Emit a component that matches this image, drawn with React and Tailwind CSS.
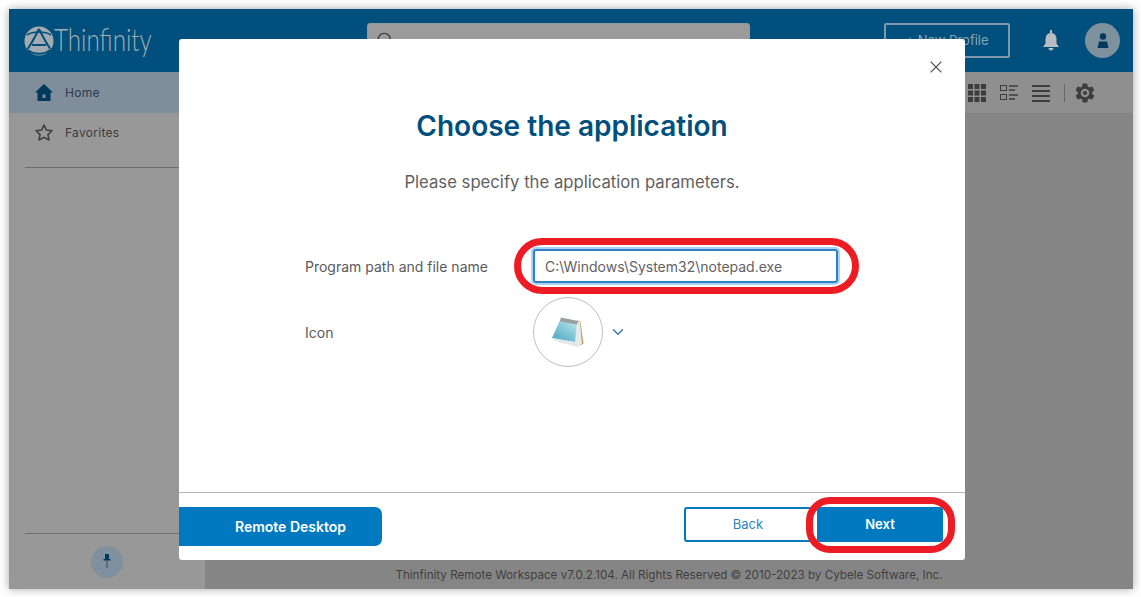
import React from "react";
import { X, ChevronDown, Search } from "lucide-react";

const font = { fontFamily: "Inter, 'Noto Sans', sans-serif" };

function Logo() {
  return (
    <div className="flex items-center">
      <svg width="30" height="30" viewBox="0 0 30 30" fill="none">
        <circle cx="15" cy="15" r="14.500" fill="#a4abb0" />
        <path d="M15 3 C11.500 10 8 17 3.500 23" stroke="#004f7c" strokeWidth="2" />
        <path d="M15 3 C18.500 10 22 17 26.500 23" stroke="#004f7c" strokeWidth="2" />
        <path d="M8 19 H22" stroke="#004f7c" strokeWidth="2" />
        <path d="M3 9 C9 5 21 5 27 9" stroke="#004f7c" strokeWidth="1.600" />
        <path d="M4 24 C10 29 20 29 26 24" stroke="#004f7c" strokeWidth="1.800" />
      </svg>
      <div className="w-[98px]">
        <span className="inline-block origin-left scale-x-[0.78] text-[31px] leading-none font-light text-[#a3adb3] font-['Lato',sans-serif]">Thinfinity</span>
      </div>
    </div>
  );
}

function HomeIcon() {
  return (
    <svg width="18" height="17" viewBox="0 0 18 17" fill="#00395c">
      <path fillRule="evenodd" d="M9 0 L18 8.500 L15.500 8.500 L15.500 17 L2.500 17 L2.500 8.500 L0 8.500 Z M7.500 10.500 V14 H10.500 V10.500 Z" />
    </svg>
  );
}
function StarIcon() {
  return (
    <svg width="18" height="17" viewBox="0 0 18 17" fill="none" stroke="#3d3d3d" strokeWidth="1.500" strokeLinejoin="round">
      <path d="M9 1 L11.400 6.100 L17 6.800 L12.900 10.600 L14 16 L9 13.300 L4 16 L5.100 10.600 L1 6.800 L6.600 6.100 Z" />
    </svg>
  );
}
function BellIcon() {
  return (
    <svg width="16" height="21" viewBox="0 0 16 21" fill="#b7bdc0">
      <path d="M7 0h2v3c3 .6 4.500 3 4.500 6v4.500L16 17H0l2.500-3.500V9C2.500 6 4 3.600 7 3z" />
      <path d="M5.500 18h5c0 1.500-1 2.500-2.500 2.500s-2.500-1-2.500-2.500z" />
    </svg>
  );
}
function GridIcon() {
  return (
    <svg width="18" height="18" viewBox="0 0 18 18" fill="#3d3d3d">
      {[0, 6.500, 13].map((y) => [0, 6.500, 13].map((x) => <rect key={`${x}-${y}`} x={x} y={y} width="5" height="5" />))}
    </svg>
  );
}
function ListDetailIcon() {
  return (
    <svg width="18" height="18" viewBox="0 0 18 18" fill="none" stroke="#3d3d3d">
      <rect x="0.500" y="1.500" width="6" height="5" />
      <rect x="0.500" y="10.500" width="6" height="5" />
      <path d="M9 2h9M9 6h6M9 11h9M9 15h6" strokeWidth="1.600" />
    </svg>
  );
}
function ListIcon() {
  return (
    <svg width="18" height="18" viewBox="0 0 18 18" fill="none" stroke="#3d3d3d" strokeWidth="2">
      <path d="M0 2h18M0 7h18M0 12h18M0 17h18" />
    </svg>
  );
}
function GearIcon() {
  return (
    <svg width="20" height="20" viewBox="1.500 1.500 21 21" fill="#3d3d3d">
      <path fillRule="evenodd" d="M19.400 13c.1-.3.1-.7.1-1s0-.7-.1-1l2.100-1.600c.2-.2.2-.4.1-.6l-2-3.500c-.1-.2-.4-.3-.6-.2l-2.500 1c-.5-.4-1.100-.7-1.700-1l-.4-2.600c0-.3-.2-.5-.5-.5h-4c-.3 0-.5.2-.5.4l-.4 2.700c-.6.2-1.100.6-1.700 1l-2.500-1c-.2-.1-.5 0-.6.2l-2 3.500c-.1.2-.1.5.1.6L4.500 11c0 .3-.1.7-.1 1s0 .7.1 1l-2.100 1.600c-.2.2-.2.4-.1.6l2 3.500c.1.2.4.3.6.2l2.500-1c.5.4 1.100.7 1.700 1l.4 2.600c0 .2.2.4.5.4h4c.3 0 .5-.2.5-.4l.4-2.600c.6-.3 1.200-.6 1.700-1l2.500 1c.2.1.5 0 .6-.2l2-3.500c.1-.2.1-.5-.1-.6L19.400 13zM12 16.500a4.500 4.500 0 1 1 0-9 4.500 4.500 0 0 1 0 9z" />
      <circle cx="12" cy="12" r="2.200" />
    </svg>
  );
}
function PinIcon() {
  return (
    <svg width="8" height="15" viewBox="0 0 8 15" fill="#00395c">
      <rect x="2" y="0" width="4" height="5" />
      <rect x="0.500" y="5" width="7" height="1.500" />
      <rect x="3.500" y="6.500" width="1" height="8" fill="#33536b" />
    </svg>
  );
}
function UserIcon() {
  return (
    <svg width="14" height="15" viewBox="0 0 14 15" fill="#00395c">
      <circle cx="7" cy="3.500" r="3.200" />
      <path d="M1.500 15 L3 8.500 H11 L12.500 15 Z" />
    </svg>
  );
}
function NotepadIcon() {
  return (
    <svg width="32" height="31" viewBox="0 0 32 31">
      <defs>
        <linearGradient id="np" x1="0.1" y1="1" x2="0.8" y2="0">
          <stop offset="0" stopColor="#4ea6c0" />
          <stop offset="0.6" stopColor="#8cccdc" />
          <stop offset="1" stopColor="#c5e6ed" />
        </linearGradient>
      </defs>
      <path d="M25 3 L28.500 5 L31.500 27 L26 29 Z" fill="#b5995a" />
      <path d="M24 4 L28 5 L30 27 L25 30 L6 25 Z" fill="#e6e9ea" />
      <path d="M9 1 L25 4 L23 25 L0 21 Z" fill="url(#np)" />
      <path d="M9 0.500 L26 4 L25 7.500 L8 4.500 Z" fill="#9aa09f" />
      <path d="M0 21 L23 25 L25 28 L3 24 Z" fill="#dfe7e9" />
    </svg>
  );
}

export default function App() {
  return (
    <div className="h-screen w-full overflow-hidden bg-white pl-[9px] pr-[8px] pt-[9px] pb-[8px]" style={font}>
      <div className="relative flex h-full flex-col shadow-[0_0_9px_rgba(0,0,0,0.35)]">
        <header className="flex h-[63px] shrink-0 items-center bg-[#004f7c] pl-[15px] pr-[13px]">
          <Logo />
          <div className="ml-[215px] flex h-[34px] w-[383px] -translate-y-[1px] items-center rounded-[3px] border border-[#8d9aa2] bg-[#9b9b9b] pl-[8px]">
            <Search className="h-[18px] w-[18px]" stroke="#333" strokeWidth={1.500} />
          </div>
          <div className="ml-auto flex items-center">
            <button className="flex h-[35px] w-[126px] items-center justify-center rounded-[2px] border-2 border-[#7d99ab] text-[13px] text-[#8ba4b4]">+ New Profile</button>
            <div className="ml-[33px]"><BellIcon /></div>
            <div className="ml-[26px] flex h-[35px] w-[35px] items-center justify-center rounded-full bg-[#7d919f]"><UserIcon /></div>
          </div>
        </header>
        <div className="flex min-h-0 flex-1">
          <aside className="flex w-[196px] shrink-0 flex-col bg-[#999899]">
            <div className="flex h-[41px] items-center bg-[#7f8e9a] pl-[26px] text-[12px] tracking-[0.3px] text-[#2b3a4b]">
              <HomeIcon />
              <span className="ml-[12px]">Home</span>
            </div>
            <div className="flex h-[39px] items-center pl-[26px] text-[12px] tracking-[0.3px] text-[#3b3b3f]">
              <StarIcon />
              <span className="ml-[12px]">Favorites</span>
            </div>
            <div className="ml-[16px] mt-[15px] border-t border-[#6e6e6e]" />
            <div className="mt-auto ml-[16px] border-t border-[#6e6e6e]" />
            <div className="flex h-[55px] items-center justify-center">
              <div className="flex h-[32px] w-[32px] items-center justify-center rounded-full bg-[#7f919e]"><PinIcon /></div>
            </div>
          </aside>
          <main className="flex min-w-0 flex-1 flex-col bg-[#868586]">
            <div className="flex h-[41px] shrink-0 items-center justify-end bg-[#8f8f8f] pr-[38px]">
              <GridIcon />
              <div className="ml-[14px]"><ListDetailIcon /></div>
              <div className="ml-[14px]"><ListIcon /></div>
              <div className="ml-[14px] h-[18px] border-l border-[#666]" />
              <div className="ml-[10px]"><GearIcon /></div>
            </div>
            <div className="flex-1" />
            <footer className="flex h-[28px] items-center justify-center pt-[1px] text-[11.65px] text-[#3f3f3f]">
              Thinfinity Remote Workspace v7.0.2.104. All Rights Reserved © 2010-2023 by Cybele Software, Inc.
            </footer>
          </main>
        </div>

        <div className="absolute left-[170px] top-[30px] flex h-[521px] w-[786px] flex-col rounded-[3px] bg-white">
          <button className="absolute right-[19px] top-[18px] text-[#555]"><X className="h-[20px] w-[20px]" strokeWidth={1.300} /></button>
          <h1 className="mt-[68px] text-center text-[28px] font-semibold leading-[38px] text-[#004f7c]">Choose the application</h1>
          <p className="mt-[25px] text-center text-[16.7px] leading-[24px] text-[#5f5f5f]">Please specify the application parameters.</p>
          <div className="mt-[55px] flex items-center pl-[126px]">
            <label className="w-[228px] text-[14px] text-[#5a5a5a]">Program path and file name</label>
            <div className="relative">
              <div className="flex h-[34px] w-[305px] items-center rounded-[3px] border-2 border-[#2f80c8] pl-[10px] text-[14px] text-[#626262] shadow-[0_0_0_2px_#a9d2f5]">C:\Windows\System32\notepad.exe</div>
              <div className="absolute -left-[19px] -top-[11px] h-[56px] w-[345px] rounded-[28px] border-[7px] border-[#ed1c24]" />
            </div>
          </div>
          <div className="mt-[14px] flex items-center pl-[126px]">
            <label className="w-[228px] text-[14px] text-[#5a5a5a]">Icon</label>
            <div className="flex h-[70px] w-[70px] items-center justify-center rounded-full border border-[#bdbdbd]"><NotepadIcon /></div>
            <ChevronDown className="ml-[6px] h-[18px] w-[18px]" stroke="#2b6fa8" strokeWidth={1.600} />
          </div>
          <div className="mt-auto flex h-[68px] shrink-0 items-start border-t border-[#b5b5b5] pt-[14px]">
            <button className="flex h-[39px] w-[203px] items-center justify-center rounded-r-[7px] bg-[#0079c1] pl-[20px] text-[14px] font-semibold text-white">Remote Desktop</button>
            <div className="ml-auto flex gap-[5px] pr-[22px]">
              <button className="h-[35px] w-[128px] rounded-[3px] border-2 border-[#0079c1] text-[13px] text-[#2a86c0]">Back</button>
              <div className="relative">
                <button className="h-[35px] w-[126px] rounded-[3px] bg-[#0079c1] text-[13px] font-semibold text-white">Next</button>
                <div className="absolute -left-[11px] -top-[10px] h-[56px] w-[149px] rounded-[24px] border-[7px] border-[#ed1c24]" />
              </div>
            </div>
          </div>
        </div>
      </div>
    </div>
  );
}
